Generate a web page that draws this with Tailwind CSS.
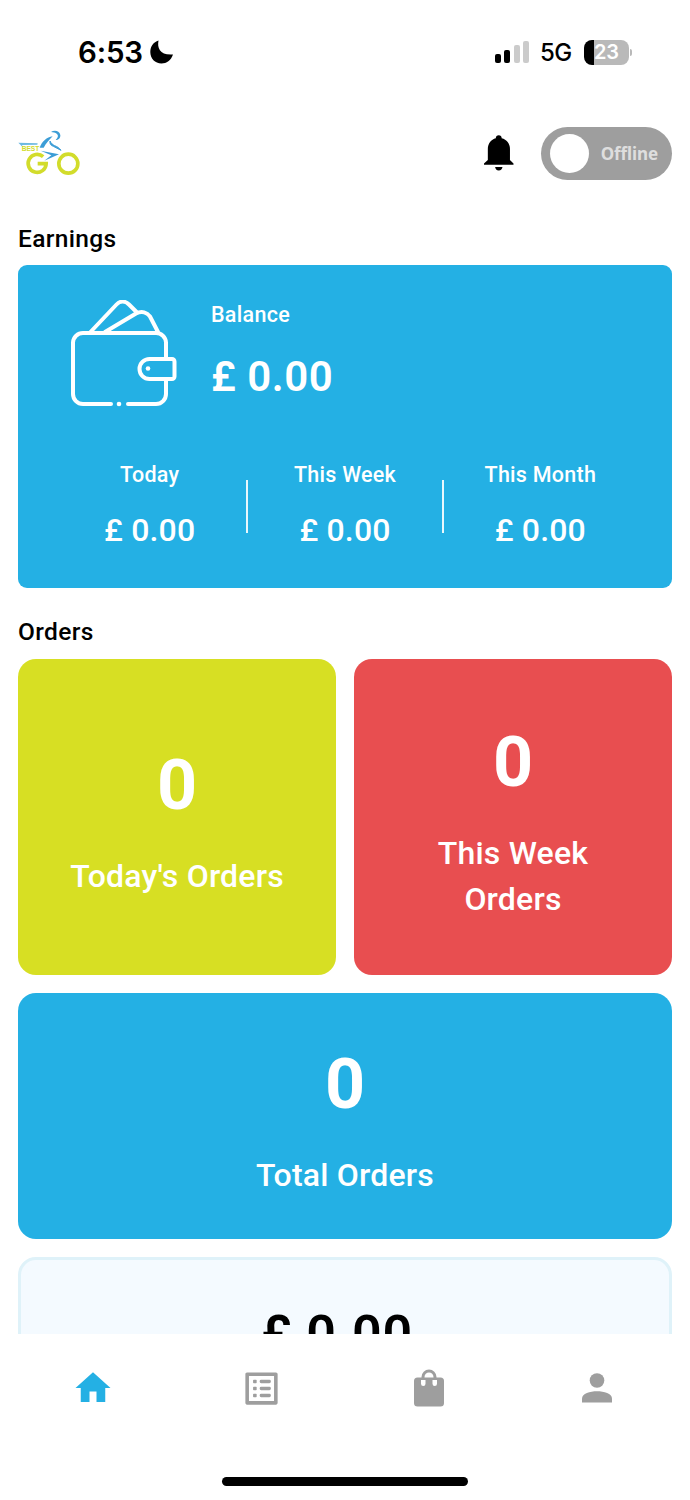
<!DOCTYPE html>
<html lang="en">
<head>
<meta charset="utf-8">
<title>Best Go Driver</title>
<script src="https://cdn.jsdelivr.net/npm/@tailwindcss/browser@4"></script>
</head>
<body class="bg-white">
<div class="w-[690px] h-[1500px] overflow-hidden flex flex-col bg-white text-black font-['Roboto',sans-serif] font-medium">

  <!-- Status bar -->
  <div class="h-[104px] shrink-0 flex items-start justify-between pl-[78px] pr-[58px] pt-9 font-['Inter',sans-serif]">
    <div class="flex items-center h-8 gap-[7px]">
      <span class="text-[29.5px] leading-8 font-semibold tracking-[-0.2px]">6:53</span>
      <svg class="w-6 h-6" viewBox="0 0 24 24"><path d="M8.5 .5C7 8 10 15.500 23 14.500C21 20.500 16.500 23.500 11.500 23.500C5 23.500 .3 18.500 .3 12C.3 6.500 3.500 2 8.500 .5Z"/></svg>
    </div>
    <div class="flex items-center h-8">
      <div class="flex items-end gap-[3.500px] h-[22px]">
        <div class="w-[6px] h-[9px] rounded-[2px] bg-black"></div>
        <div class="w-[6px] h-[13px] rounded-[2px] bg-black"></div>
        <div class="w-[6px] h-[18px] rounded-[2px] bg-[#cbcbcb]"></div>
        <div class="w-[6px] h-[22px] rounded-[2px] bg-[#cbcbcb]"></div>
      </div>
      <span class="ml-[11px] w-[33px] pt-[2px] text-[24px] leading-8 font-medium tracking-[-0.5px]">5G</span>
      <div class="ml-[11px] w-[45px] h-[25px] rounded-[8px] bg-[linear-gradient(to_right,#000_10.5px,#b9b9b9_10.5px)] text-white font-semibold text-[20px] leading-[25px] text-center tracking-[-0.2px]">23</div>
      <div class="ml-[1px] w-[2px] h-[7px] rounded-r-full bg-[#b9b9b9]"></div>
    </div>
  </div>

  <!-- App header -->
  <header class="h-[98px] shrink-0 flex items-center justify-between pl-[10px] pr-[18px]">
    <svg class="w-[90px] h-[65px]" viewBox="0 3 270 195" fill="none">
      <g stroke="#d2dc2b" stroke-width="11">
        <path d="M99.500 110A27 27 0 1 0 108.500 131H83"/>
        <ellipse cx="175" cy="131" rx="28.500" ry="28.500"/>
      </g>
      <path d="M25 68L83 70L82 74L36 75L40 83Z" fill="#6cb9e2"/>
      <text x="35" y="92" font-family="Liberation Sans" font-weight="700" font-size="20" textLength="53" lengthAdjust="spacingAndGlyphs" fill="#d2dc2b">BEST</text>
      <g fill="#3c9dd6">
        <path d="M89 83C96 65 110 51 128 49C117 60 108 70 101 83Z"/>
        <path d="M123 36C132 30 148 31 151 45C152 54 145 60 137 60C144 53 146 47 141 42C136 37 130 38 123 36Z"/>
        <path d="M120 63C119 72 122 76 130 79L153 91C148 84 142 80 134 77C128 74 123 70 120 63Z" stroke="#3c9dd6" stroke-width="3"/>
        <path d="M92 92L147 103L103 122L124 106Z"/>
      </g>
    </svg>
    <div class="flex items-center gap-[27px]">
      <svg class="w-[29.500px] h-[36px]" viewBox="0 0 30 36"><path d="M15 0c1.800 0 3 1.200 3 3c5 1.300 8.400 5.500 8.400 10.800V25L30 28.700V30H0V28.700L3.900 25V13.800C3.900 8.500 7.200 4.300 12 3c0-1.800 1.200-3 3-3ZM11.300 32.200H18.800C18.600 34.200 17.200 35.700 15 35.700S11.500 34.200 11.300 32.200Z"/></svg>
      <div class="w-[131.500px] h-[53px] rounded-full bg-[#9e9e9e] flex items-center justify-between pl-[9.500px] pr-[14px]">
        <div class="size-[39px] rounded-full bg-white"></div>
        <span class="pt-px font-['Noto_Sans',sans-serif] font-bold text-[17px] leading-6 tracking-[-0.1px] text-[#dedede]">Offline</span>
      </div>
    </div>
  </header>

  <!-- Scrolling content -->
  <main class="h-[1132px] shrink-0 overflow-hidden px-[18px] pt-[22.500px]">
    <h2 class="text-[24.500px] leading-7 tracking-[0.35px]">Earnings</h2>

    <section class="mt-3 h-[323.500px] rounded-[9px] bg-[#24b0e4] text-white px-[34px] pt-[35px]">
      <div class="flex">
        <svg class="w-[108px] h-[108px] ml-[17.500px]" viewBox="0 0.500 108 108" fill="none" stroke="#fff" stroke-width="4" stroke-linecap="round" stroke-linejoin="round">
          <path d="M41 104.500H13A10 10 0 0 1 3 94.500V43A10 10 0 0 1 13 33.500H86A10 10 0 0 1 96 43V58"/>
          <path d="M58 104.500H86A10 10 0 0 0 96 94.500V80"/>
          <path d="M102 59.500H79.500A10 10 0 0 0 79.500 79.500H102A2.500 2.500 0 0 0 104.500 77V62A2.500 2.500 0 0 0 102 59.500Z"/>
          <path d="M20.500 32.500L46.500 5C50 1.200 55 1 59 5L66.500 12.500"/>
          <path d="M35 32.500L66 14C72 11 77 13 80 17L88 32.500"/>
          <circle cx="78" cy="69" r="2.300" fill="#fff" stroke="none"/>
          <circle cx="49" cy="104.500" r="2.300" fill="#fff" stroke="none"/>
        </svg>
        <div class="ml-[33.500px]">
          <div class="mt-[3px] text-[21.500px] leading-6 tracking-[0.3px]">Balance</div>
          <div class="mt-[25px] text-[42px] leading-[50px] font-semibold tracking-[0.5px]">£ 0.00</div>
        </div>
      </div>
      <div class="mt-[53px] grid grid-cols-3 text-center relative">
        <div class="pt-[2.500px]">
          <div class="text-[21.500px] leading-6 tracking-[0.25px]">Today</div>
          <div class="mt-[22.500px] text-[32px] leading-10 tracking-[0.15px]">£ 0.00</div>
        </div>
        <div class="pt-[2.500px]">
          <div class="text-[21.500px] leading-6 tracking-[0.25px]">This Week</div>
          <div class="mt-[22.500px] text-[32px] leading-10 tracking-[0.15px]">£ 0.00</div>
        </div>
        <div class="pt-[2.500px]">
          <div class="text-[21.500px] leading-6 tracking-[0.25px]">This Month</div>
          <div class="mt-[22.500px] text-[32px] leading-10 tracking-[0.15px]">£ 0.00</div>
        </div>
        <div class="absolute left-[194px] top-[19px] w-[2px] h-[53px] bg-white/90"></div>
        <div class="absolute left-[389.500px] top-[19px] w-[2px] h-[53px] bg-white/90"></div>
      </div>
    </section>

    <h2 class="mt-[30px] text-[24.500px] leading-7 tracking-[0.35px]">Orders</h2>

    <section class="mt-[12.500px] grid grid-cols-2 gap-[18px] text-center text-white">
      <div class="h-[316.500px] rounded-[18px] bg-[#d7df23] flex flex-col items-center justify-center px-10">
        <div class="text-[70px] leading-[100px] font-bold">0</div>
        <div class="mt-[18px] text-[32px] leading-[46px] tracking-[0.2px]">Today's Orders</div>
      </div>
      <div class="h-[316.500px] rounded-[18px] bg-[#e84e50] flex flex-col items-center justify-center px-10">
        <div class="text-[70px] leading-[100px] font-bold">0</div>
        <div class="mt-[18px] text-[32px] leading-[46px] tracking-[0.2px]">This Week<br>Orders</div>
      </div>
      <div class="col-span-2 h-[246px] rounded-[18px] bg-[#24b0e4] flex flex-col items-center justify-center">
        <div class="text-[70px] leading-[100px] font-bold">0</div>
        <div class="mt-[18px] text-[32px] leading-[46px] tracking-[0.2px]">Total Orders</div>
      </div>
      <div class="col-span-2 h-[246px] rounded-[18px] border-[3px] border-[#dff2f9] bg-[#f4faff] text-black pt-[24.500px] pr-4">
        <div class="text-[52px] leading-[100px] font-semibold tracking-[0.7px]">£ 0.00</div>
      </div>
    </section>
  </main>

  <!-- Bottom navigation -->
  <nav class="h-[108px] shrink-0 grid grid-cols-4 px-[9px] text-[#9e9e9e]">
    <div class="flex justify-center pt-[33px]">
      <svg class="size-[42px] text-[#24b0e4]" viewBox="0 0 24 24" fill="currentColor"><path d="M10 20v-6h4v6h5v-8h3L12 3 2 12h3v8z"/></svg>
    </div>
    <div class="flex justify-center pt-[32.500px]">
      <svg class="size-[43px]" viewBox="0 0 24 24" fill="currentColor"><path d="M19 5v14H5V5h14m1.100-2H3.900c-.5 0-.9.4-.9.900v16.200c0 .4.4.900.900.900h16.200c.4 0 .9-.5.900-.900V3.900c0-.5-.5-.900-.9-.900z"/><rect x="7.300" y="7.100" width="2" height="2" rx=".4"/><rect x="7.300" y="11" width="2" height="2" rx=".4"/><rect x="7.300" y="14.900" width="2" height="2" rx=".4"/><rect x="11" y="7.100" width="6.200" height="2" rx=".8"/><rect x="11" y="11" width="6.200" height="2" rx=".8"/><rect x="11" y="14.900" width="6.200" height="2" rx=".8"/></svg>
    </div>
    <div class="flex justify-center pt-[35px]">
      <svg class="w-[30px] h-[38px]" viewBox="0 0 30 38" fill="none"><rect y="8.500" width="30" height="29" rx="3.500" fill="#9e9e9e"/><path d="M9 9V8A6 6 0 0 1 21 8V9" stroke="#9e9e9e" stroke-width="3"/><path d="M7 11H11.500V14.800A2.250 2.250 0 0 1 7 14.800ZM18.500 11H23V14.800A2.250 2.250 0 0 1 18.500 14.800Z" fill="#fff"/></svg>
    </div>
    <div class="flex justify-center pt-[39px]">
      <svg class="w-[30px] h-[30px]" viewBox="0 0 30 30" fill="currentColor"><circle cx="15" cy="7.500" r="7.300"/><path d="M0 29.500V25.500C0 20.500 8 18.300 15 18.300S30 20.500 30 25.500V29.500Z"/></svg>
    </div>
  </nav>

  <!-- Home indicator -->
  <div class="flex-1 flex justify-center pt-[34.500px]">
    <div class="w-[246px] h-[9px] rounded-full bg-black"></div>
  </div>
</div>
</body>
</html>
